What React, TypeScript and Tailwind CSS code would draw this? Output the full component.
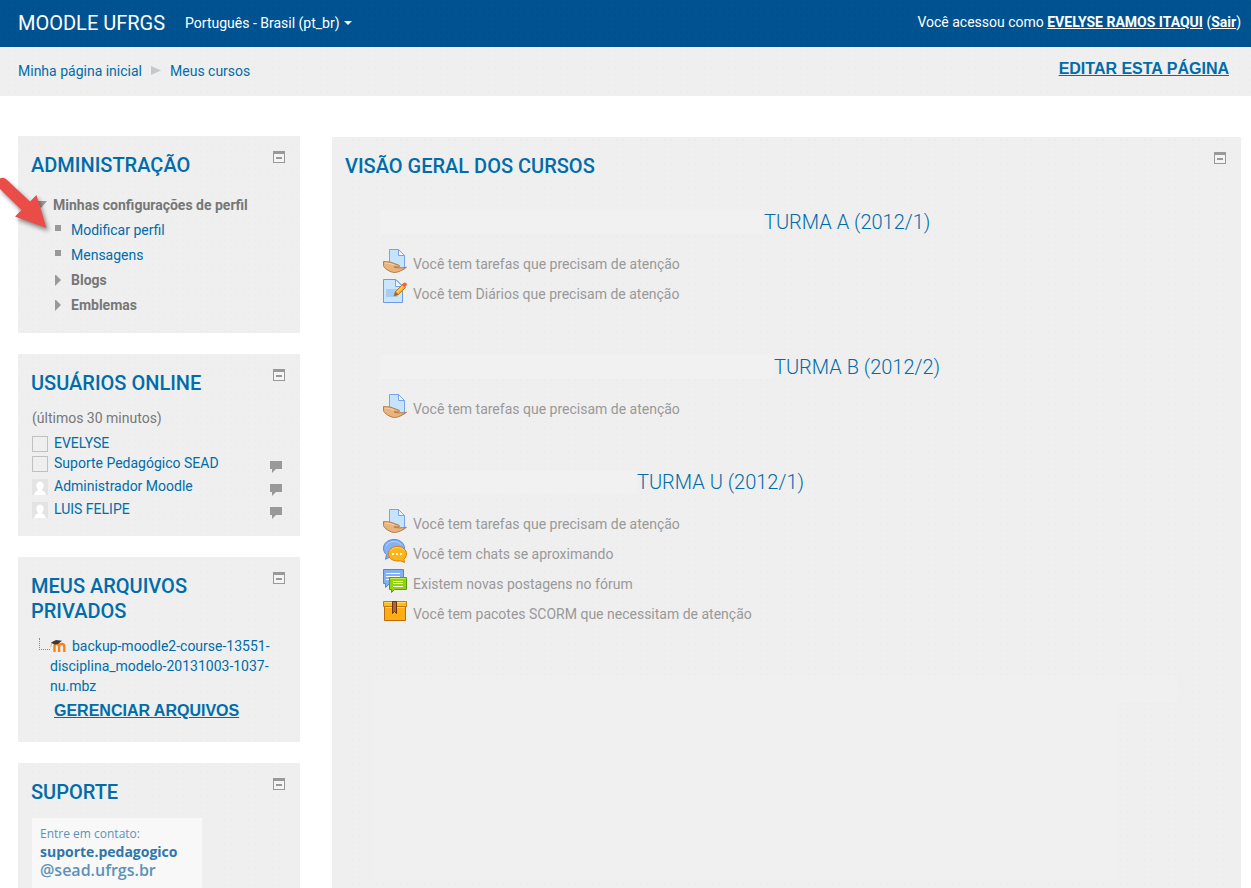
import type { ReactNode } from 'react';

const texture = 'bg-[#efefef] bg-[radial-gradient(#ededed_1px,transparent_1px)] bg-[length:6px_6px]';
const link = 'text-[#006ca9] hover:underline';

function CollapseButton({ label }: { label: string }) {
  return (
    <button type="button" aria-label={`Ocultar ${label}`} className="block h-3 w-3 shrink-0">
      <svg viewBox="0 0 12 12" width="12" height="12" shapeRendering="crispEdges">
        <rect width="12" height="12" fill="#999" />
        <rect x="1" y="3" width="10" height="8" fill="#f4f4f4" />
        <rect x="3" y="6" width="6" height="2" fill="#999" />
      </svg>
    </button>
  );
}

function Block({ title, className = '', children }: { title: string; className?: string; children: ReactNode }) {
  return (
    <section className={`${texture} pt-[15px] pl-[13px] ${className}`}>
      <div className="flex items-start justify-between pr-[15px]">
        <h2 className="max-w-[260px] pt-[2px] text-xl leading-[25px] font-medium text-[#006ca9] uppercase">{title}</h2>
        <CollapseButton label={title} />
      </div>
      {children}
    </section>
  );
}

function Triangle({ down = false }: { down?: boolean }) {
  return (
    <svg viewBox="0 0 12 12" width="12" height="12" fill="#999" className="shrink-0">
      {down ? <path d="M0 1h12L6 8z" /> : <path d="M3 -1l6 6-6 6z" />}
    </svg>
  );
}

function Square() {
  return (
    <svg viewBox="0 0 12 12" width="12" height="12" fill="#999" className="shrink-0">
      <rect x="3" width="6" height="6" />
    </svg>
  );
}

function BrokenPicture() {
  return <span className="mt-[3px] block h-4 w-4 shrink-0 border border-[#c0c0c0]" />;
}

function Avatar() {
  return (
    <svg viewBox="0 0 16 16" width="16" height="16" className="mt-[3px] shrink-0">
      <rect width="16" height="16" fill="#e3e3e3" />
      <path d="M8 2.5c2.300 0 3.700 1.700 3.700 4 0 1.600-.6 3-1.500 3.800v1.200c2 .8 3.300 2 3.600 4.500H2.200c.3-2.500 1.600-3.700 3.600-4.500v-1.200C4.900 9.500 4.300 8.100 4.300 6.500c0-2.300 1.400-4 3.700-4z" fill="#fff" />
    </svg>
  );
}

function ChatMark() {
  return (
    <svg viewBox="0 0 12 12" width="12" height="12" fill="#999">
      <path d="M0 0h12v8H6l-4 4V8H0z" />
    </svg>
  );
}

function AssignIcon() {
  return (
    <svg viewBox="0 0 24 24" width="24" height="24">
      <path d="M6.500.5h9l6 6V20h-15z" fill="#c5e3fb" stroke="#7ba3e8" />
      <path d="M15.500.5v6h6z" fill="#eef7ff" stroke="#7ba3e8" />
      <path d="M.5 12.500c3 .2 5 .2 7.500.8 2.800.7 5 2.200 8 3 .9.300.7 1.500-.3 1.600l-4.700.1c3.800 1.300 7.800.9 12.500.3-3 2.200-8 5.200-12 5.200C7.500 23.500.5 19 .5 16.500z" fill="#e8b47d" stroke="#b67b47" />
      <path d="M2 14.200c4 .3 6 .4 9 1.800" fill="none" stroke="#f5d2a6" />
    </svg>
  );
}

function JournalIcon() {
  return (
    <svg viewBox="0 0 24 24" width="24" height="24">
      <path d="M.5.5H13l6.500 6.500v16.500H.5z" fill="#c9e6fc" stroke="#6f9ae6" />
      <rect x="3" y="10" width="12" height="8" fill="#a5cdf6" />
      <path d="M12.500.5v7h7z" fill="#eaf5ff" stroke="#7ba3e8" />
      <path d="M11 17l1.500-4.500 7-7 3 3-7 7z" fill="#f9b52a" stroke="#c67a15" />
      <path d="M11 17l1.500-4.500 3 3z" fill="#8c6a4b" />
      <path d="M18.800 5.800l1.700-1.700c1.800-1.800 4.500.8 2.800 2.600l-1.800 1.900z" fill="#e8653a" />
      <path d="M14 13.300l6-6" stroke="#ffe08a" />
    </svg>
  );
}

function ChatIcon() {
  return (
    <svg viewBox="0 0 24 24" width="24" height="24">
      <path d="M11 .5c6 0 10.500 3.800 10.500 8.700S17 18 11 18H7l-4.500 2.200 1-4.500C1.500 14 .5 11.700.5 9.200.5 4.300 5 .5 11 .5z" fill="#85b0f2" stroke="#5585db" />
      <path d="M3 7c1.500-3 4.500-4.500 8-4.500s6 1.400 7.500 3.500" fill="none" stroke="#b6d1fb" />
      <path d="M14.500 7.500c5.200 0 9 3.200 9 7.300 0 2.300-1 4.200-2.700 5.500l.7 3.200-4.200-1.700c-6.800 1.200-12-2.300-12-7 0-4.100 4-7.300 9.200-7.300z" fill="#fcb514" stroke="#d77c09" />
      <path d="M7.500 12c1.200-2.200 4-3.500 7-3.500s5.500 1.200 7 3.200" fill="none" stroke="#ffd865" />
      <g fill="#fff">
        <rect x="9" y="14" width="2" height="2" />
        <rect x="13" y="14" width="2" height="2" />
        <rect x="17" y="14" width="2" height="2" />
      </g>
    </svg>
  );
}

function ForumIcon() {
  return (
    <svg viewBox="0 0 24 24" width="24" height="24">
      <path d="M.5.5h20v14h-14l-4 4v-4h-2z" fill="#84b0f2" stroke="#5585db" />
      <path d="M3 4.500h14M3 7.500h14M3 10.500h4" stroke="#fff" />
      <path d="M6.500 8.500h17v12h-12l-3 3v-3h-2z" fill="#91d30c" stroke="#579e13" />
      <path d="M7.500 9.500h15" stroke="#c3ee55" />
      <path d="M10 12.500h10M10 14.500h10M10 17.500h10" stroke="#fff" />
    </svg>
  );
}

function PackageIcon() {
  return (
    <svg viewBox="0 0 24 24" width="24" height="24">
      <path d="M1.500 7.500h21v14h-21z" fill="#fbad13" stroke="#bd6b0a" />
      <path d="M.5 2.500h23v5H.5z" fill="#fdbb20" stroke="#c9770b" />
      <path d="M1.500 3.500h21M2.500 8.500h19" stroke="#ffdc62" />
      <path d="M9.500 2.500h4v12l-2-2-2 2z" fill="#ad6733" stroke="#6f3511" />
    </svg>
  );
}

function MoodleIcon() {
  return (
    <svg viewBox="0 0 16 16" width="16" height="16" className="mr-[6px] inline-block align-[-3px]">
      <path d="M4.500 14V8.500c0-3.300 4.600-3.300 4.600 0V14m0-5.500c0-3.300 5.200-3.300 5.200 0V14" fill="none" stroke="#f58220" strokeWidth="2.400" />
      <path d="M1 4.500L6 2l6 .8-4 3.200-3.500.5-2-1z" fill="#3a3a3a" />
      <path d="M1.700 4.800L.7 9" stroke="#f3a060" strokeWidth=".8" />
    </svg>
  );
}

const users = [
  { name: 'EVELYSE', picture: false, chat: false },
  { name: 'Suporte Pedagógico SEAD', picture: false, chat: true },
  { name: 'Administrador Moodle', picture: true, chat: true },
  { name: 'LUIS FELIPE', picture: true, chat: true },
];

const tasks = { icon: <AssignIcon />, text: 'Você tem tarefas que precisam de atenção' };

const courses = [
  {
    title: 'TURMA A (2012/1)',
    cover: 'w-[384px]',
    items: [tasks, { icon: <JournalIcon />, text: 'Você tem Diários que precisam de atenção' }],
  },
  { title: 'TURMA B (2012/2)', cover: 'w-[394px]', items: [tasks] },
  {
    title: 'TURMA U (2012/1)',
    cover: 'w-[257px]',
    items: [
      tasks,
      { icon: <ChatIcon />, text: 'Você tem chats se aproximando' },
      { icon: <ForumIcon />, text: 'Existem novas postagens no fórum' },
      { icon: <PackageIcon />, text: 'Você tem pacotes SCORM que necessitam de atenção' },
    ],
  },
];

function Header() {
  return (
    <header className="flex h-[47px] items-center justify-between bg-[#005390] bg-[radial-gradient(#00508c_1px,transparent_1px)] bg-[length:6px_6px] pr-[10px] pb-[2px] pl-[18px] text-white">
      <div className="flex items-center gap-5">
        <a href="#" className="text-xl leading-6">MOODLE UFRGS</a>
        <button type="button" className="flex items-center gap-1 leading-5">
          Português - Brasil (pt_br)
          <svg viewBox="0 0 8 4" width="8" height="4" fill="currentColor"><path d="M0 0h8L4 4z" /></svg>
        </button>
      </div>
      <p className="pb-[2px] leading-5">
        Você acessou como <a href="#" className="font-bold underline">EVELYSE RAMOS ITAQUI</a> (<a href="#" className="font-bold underline">Sair</a>)
      </p>
    </header>
  );
}

function Breadcrumb() {
  return (
    <nav className={`${texture} flex h-[49px] items-center justify-between pr-[22px] pb-[2px] pl-[18px]`}>
      <ol className="flex items-center gap-[9px] leading-5">
        <li><a href="#" className={link}>Minha página inicial</a></li>
        <li aria-hidden="true">
          <svg viewBox="0 0 10 9" width="10" height="9" fill="#c6c9cb"><path d="M0 0l10 4.500L0 9z" /></svg>
        </li>
        <li><a href="#" className={link}>Meus cursos</a></li>
      </ol>
      <a href="#" className="pb-[4px] font-['Liberation_Sans',sans-serif] text-base leading-5 font-bold text-[#006ca9] underline">EDITAR ESTA PÁGINA</a>
    </nav>
  );
}

function Sidebar() {
  return (
    <aside className="flex w-[282px] shrink-0 flex-col gap-[21px]">
      <Block title="Administração" className="pb-[15px]">
        <div className="mt-[15px] pl-1 leading-[25px] text-[#777]">
          <div className="flex items-center gap-[6px] font-bold"><Triangle down />Minhas configurações de perfil</div>
          <ul className="pl-[17px]">
            <li className="flex items-center gap-[7px]"><Square /><a href="#" className={link}>Modificar perfil</a></li>
            <li className="flex items-center gap-[7px]"><Square /><a href="#" className={link}>Mensagens</a></li>
            <li className="flex items-center gap-[7px] font-bold"><Triangle />Blogs</li>
            <li className="flex items-center gap-[7px] font-bold"><Triangle />Emblemas</li>
          </ul>
        </div>
      </Block>

      <Block title="Usuários online" className="pb-[14px]">
        <p className="mt-3 pl-px leading-5 text-[#777]">(últimos 30 minutos)</p>
        <ul className="mt-[5px] pr-[18px] pl-px leading-5">
          {users.map((user) => (
            <li key={user.name} className={`flex items-start gap-[6px] ${user.chat ? 'h-[23px]' : 'h-5'}`}>
              {user.picture ? <Avatar /> : <BrokenPicture />}
              <a href="#" className={`${link} flex-1`}>{user.name}</a>
              {user.chat && <a href="#" aria-label="Enviar mensagem" className="mt-2"><ChatMark /></a>}
            </li>
          ))}
        </ul>
      </Block>

      <Block title="Meus arquivos privados" className="pb-[21px]">
        <div className="mt-3 flex items-start pl-2">
          <span className="mt-[2px] h-3 w-[11px] shrink-0 border-b border-l border-dotted border-[#888]" />
          <a href="#" className={`${link} w-[226px] leading-5`}>
            <MoodleIcon />backup-moodle2-course-13551-disciplina_modelo-20131003-1037-nu.mbz
          </a>
        </div>
        <a href="#" className="mt-[5px] ml-[23px] block w-max font-['Liberation_Sans',sans-serif] text-base leading-5 font-bold text-[#006ca9] underline">GERENCIAR ARQUIVOS</a>
      </Block>

      <Block title="Suporte" className="flex flex-1 flex-col">
        <address className="mt-[13px] ml-px w-[170px] flex-1 bg-[#f8f8f8] px-[8px] pt-[6px] font-['Open_Sans',sans-serif] text-[#5b92ba] not-italic">
          <p className="text-xs leading-5">Entre em contato:</p>
          <p className="text-sm leading-4 font-bold text-[#2f76aa]">suporte.pedagogico</p>
          <p className="text-base leading-5 font-semibold">@sead.ufrgs.br</p>
        </address>
      </Block>
    </aside>
  );
}

function Overview() {
  return (
    <main className="mt-px flex min-w-0 flex-1 flex-col">
      <Block title="Visão geral dos cursos" className="flex-1 pb-2">
        <div className="mt-[31px] flex flex-col gap-12 pr-16 pl-[28px]">
          {courses.map((course) => (
            <article key={course.title} className="pl-[7px]">
              <h3 className="flex h-6 items-center text-xl leading-6 font-light">
                <span className={`${course.cover} h-6 shrink-0 bg-[#f1f1f1]`} />
                <a href="#" className={link}>{course.title}</a>
              </h3>
              <ul className="mt-[13px] pl-[3px]">
                {course.items.map((item) => (
                  <li key={item.text} className="flex h-[30px] items-start gap-[6px] pt-[2px]">
                    {item.icon}
                    <span className="pt-[5px] leading-5 text-[#999]">{item.text}</span>
                  </li>
                ))}
              </ul>
            </article>
          ))}
          <div>
            <div className="h-[27px] bg-[#f0f0f0]" />
            <div className="mr-[60px] h-[178px] bg-[#f0f0f0]" />
          </div>
        </div>
      </Block>
    </main>
  );
}

function Pointer() {
  return (
    <svg viewBox="0 0 56 64" width="56" height="64" className="pointer-events-none absolute top-[172px] left-0 drop-shadow-[2px_3px_2px_rgba(0,0,0,0.45)]">
      <path d="M0 6.500c2-1.500 4.500-1 6.500 1L30 29.500l6.500-6.500L46.500 56 15 44.500l6.500-6.500L0 17z" fill="#ea4d48" />
    </svg>
  );
}

export default function App() {
  return (
    <div className="relative flex min-h-screen flex-col bg-white font-[Roboto,sans-serif] text-sm">
      <Header />
      <Breadcrumb />
      <div className="flex flex-1 gap-8 pt-10 pr-[10px] pl-[18px]">
        <Sidebar />
        <Overview />
      </div>
      <Pointer />
    </div>
  );
}
